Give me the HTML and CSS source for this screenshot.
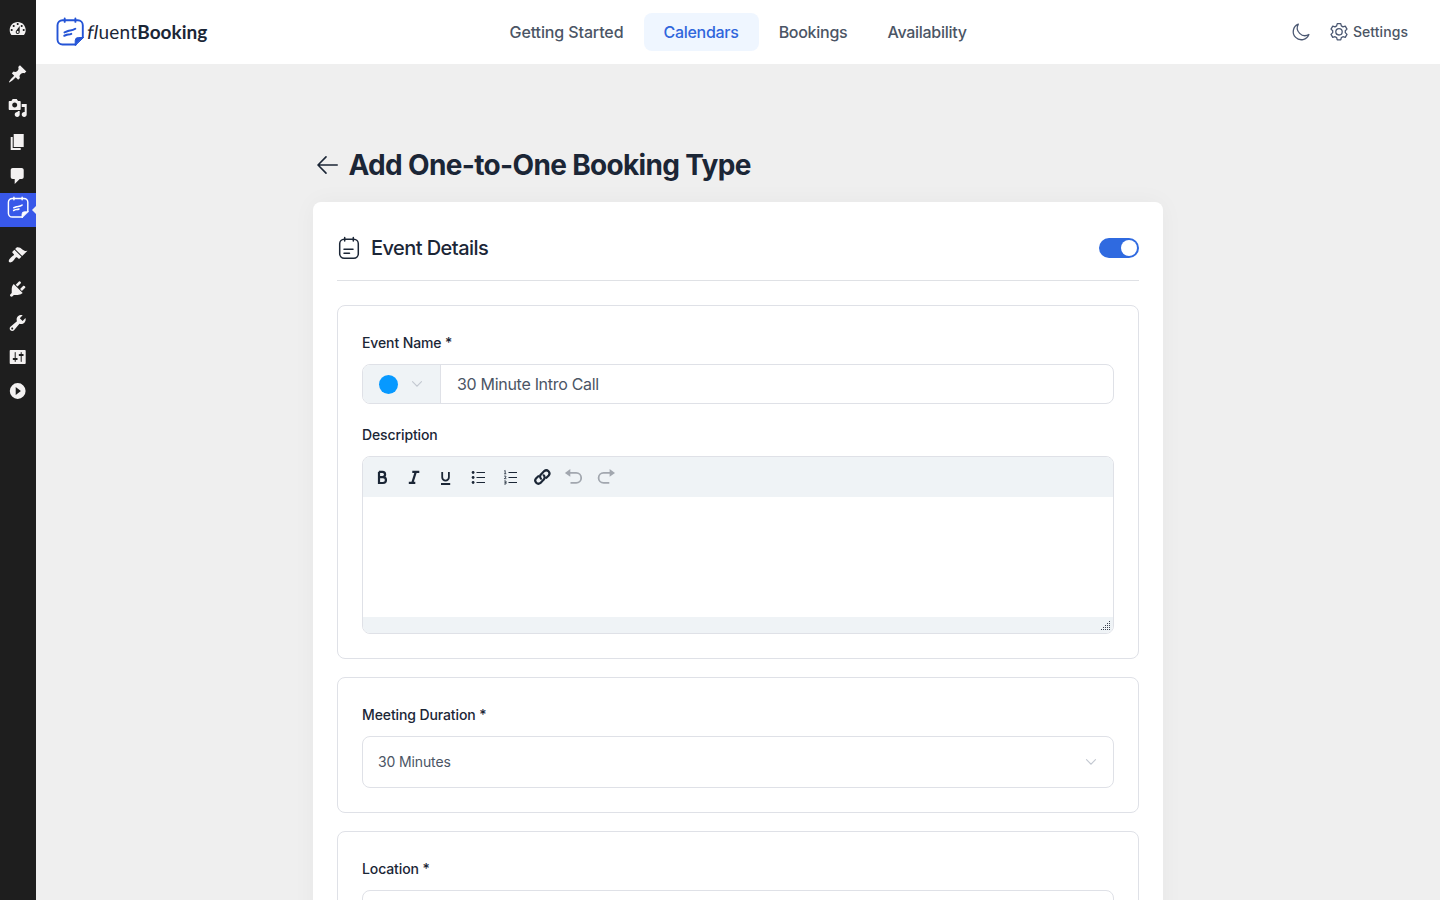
FILE: index.html
```html
<!DOCTYPE html>
<html lang="en">
<head>
<meta charset="utf-8">
<title>FluentBooking</title>
<link rel="stylesheet" href="styles.css">
</head>
<body>
<div class="app">
  <aside class="sidebar">
    <a class="side-item"><svg viewBox="0 0 20 20"><path d="M3.76 16h12.48c1.1-1.37 1.76-3.11 1.76-5 0-4.42-3.58-8-8-8s-8 3.58-8 8c0 1.89.66 3.63 1.76 5zM10 4c.55 0 1 .45 1 1s-.45 1-1 1-1-.45-1-1 .45-1 1-1zM6 6c.55 0 1 .45 1 1s-.45 1-1 1-1-.45-1-1 .45-1 1-1zm8 0c.55 0 1 .45 1 1s-.45 1-1 1-1-.45-1-1 .45-1 1-1zm-5.37 5.55L12 7v6c0 1.1-.9 2-2 2s-2-.9-2-2c0-.57.24-1.08.63-1.45zM4 10c.55 0 1 .45 1 1s-.45 1-1 1-1-.45-1-1 .45-1 1-1zm12 0c.55 0 1 .45 1 1s-.45 1-1 1-1-.45-1-1 .45-1 1-1zm-5 3c0-.55-.45-1-1-1s-1 .45-1 1 .45 1 1 1 1-.45 1-1z"/></svg></a>
    <div class="side-gap"></div>
    <a class="side-item"><svg viewBox="0 0 20 20"><path d="M10.44 3.02l1.82-1.82 6.36 6.35-1.83 1.82c-1.05-.68-2.48-.57-3.41.36l-.75.75c-.92.93-1.04 2.35-.35 3.41l-1.83 1.82-2.41-2.41-2.8 2.79c-.42.42-3.38 2.71-3.8 2.29s1.86-3.39 2.28-3.81l2.79-2.79L4.1 9.36l1.83-1.82c1.05.69 2.48.57 3.4-.36l.75-.75c.93-.92 1.05-2.35.36-3.41z"/></svg></a>
    <a class="side-item"><svg viewBox="0 0 20 20"><path d="M13 11V4c0-.55-.45-1-1-1h-1.67L9 1H5L3.67 3H2c-.55 0-1 .45-1 1v7c0 .55.45 1 1 1h10c.55 0 1-.45 1-1zM7 4.5c1.38 0 2.5 1.12 2.5 2.5S8.380 9.500 7 9.500 4.500 8.380 4.500 7 5.620 4.500 7 4.500zM14 6h5v10.500c0 1.380-1.120 2.500-2.500 2.500S14 17.880 14 16.500s1.120-2.500 2.500-2.500c.17 0 .34.02.5.05V9h-3V6zm-4 8.050V13h2v3.500c0 1.380-1.120 2.500-2.500 2.500S7 17.880 7 16.500 8.120 14 9.500 14c.17 0 .34.02.5.05z"/></svg></a>
    <a class="side-item"><svg viewBox="0 0 20 20"><path d="M6 15V2h10v13H6zm-1 1h8v2H3V5h2v11z"/></svg></a>
    <a class="side-item"><svg viewBox="0 0 20 20"><path d="M5 2h9c1.100 0 2 .9 2 2v7c0 1.100-.9 2-2 2h-2l-5 5v-5H5c-1.100 0-2-.9-2-2V4c0-1.100.9-2 2-2z"/></svg></a>
    <a class="side-item active"><svg class="brand-small" viewBox="0 0 28 30"><use href="#brand"/></svg></a>
    <div class="side-gap"></div>
    <a class="side-item"><svg viewBox="0 0 20 20"><path d="M14.480 11.060L7.410 3.990l1.500-1.500c.5-.56 2.300-.47 3.510.32 1.210.8 1.430 1.280 2.910 2.100 1.180.64 2.450 1.260 4.450.85zm-.71.71L6.700 4.700 4.930 6.470c-.39.39-.39 1.020 0 1.410l1.060 1.060c.39.39.39 1.030 0 1.420-.6.6-1.430 1.110-2.210 1.690-.35.26-.7.53-1.010.84C1.430 14.230.4 16.080 1.400 17.070c.99 1 2.840-.03 4.180-1.360.31-.31.58-.66.85-1.020.57-.78 1.080-1.610 1.690-2.210.39-.39 1.020-.39 1.410 0l1.060 1.060c.39.39 1.020.39 1.410 0z"/></svg></a>
    <a class="side-item"><svg viewBox="0 0 20 20"><path d="M13.110 4.360L9.870 7.600 8 5.730l3.240-3.240c.35-.34 1.050-.2 1.560.32.52.51.66 1.210.31 1.550zm-8 1.770l.91-1.120 9.010 9.010-1.190.84c-.71.71-2.630 1.160-3.820 1.160H6.140L4.900 17.260c-.59.59-1.540.59-2.120 0-.59-.58-.59-1.530 0-2.120l1.240-1.240v-3.880c0-1.130.4-3.190 1.090-3.890zm7.260 3.970l3.240-3.240c.34-.35 1.040-.21 1.550.31.52.51.66 1.210.31 1.550l-3.240 3.250z"/></svg></a>
    <a class="side-item"><svg viewBox="0 0 20 20"><path d="M16.680 9.770c-1.340 1.340-3.300 1.670-4.950.99l-5.410 6.520c-.99.99-2.590.99-3.580 0s-.99-2.590 0-3.570l6.520-5.420c-.68-1.650-.35-3.610.99-4.950 1.280-1.280 3.120-1.620 4.720-1.060l-2.890 2.890 2.820 2.820 2.860-2.870c.53 1.580.18 3.390-1.080 4.650zM3.810 16.210c.4.39 1.040.39 1.430 0 .4-.4.4-1.040 0-1.430-.39-.4-1.030-.4-1.430 0-.39.39-.39 1.030 0 1.430z"/></svg></a>
    <a class="side-item"><svg viewBox="0 0 20 20"><path d="M18 16V4c0-.55-.45-1-1-1H3c-.55 0-1 .45-1 1v12c0 .55.45 1 1 1h14c.55 0 1-.45 1-1zM8 11h1c.55 0 1 .45 1 1s-.45 1-1 1H8v1.500c0 .28-.22.5-.5.5s-.5-.22-.5-.5V13H6c-.55 0-1-.45-1-1s.45-1 1-1h1V5.500c0-.28.22-.5.5-.5s.5.22.5.5V11zm5-2h-1c-.55 0-1-.45-1-1s.45-1 1-1h1V5.500c0-.28.22-.5.5-.5s.5.22.5.5V7h1c.55 0 1 .45 1 1s-.45 1-1 1h-1v5.500c0 .28-.22.5-.5.5s-.5-.22-.5-.5V9z"/></svg></a>
    <a class="side-item"><svg viewBox="0 0 20 20"><path fill-rule="evenodd" d="M10 2.100a7.900 7.900 0 1 1 0 15.800a7.900 7.900 0 1 1 0-15.800zM8 6v8l5.200-4z"/></svg></a>
  </aside>

  <div class="main">
    <header class="topbar">
      <div class="logo">
        <svg class="brand" viewBox="0 0 28 30">
          <g id="brand" fill="none" stroke="currentColor" stroke-linecap="round" stroke-linejoin="round">
            <path stroke-width="1.900" d="M19.800 27.500H6.500a5 5 0 0 1-5-5V8.200a5 5 0 0 1 5-5h15.300a5 5 0 0 1 5 5v12"/>
            <path stroke-width="1.900" d="M8.700 1.500v3.400M19.400 1.500v3.400"/>
            <path stroke-width="2" d="M8.500 15.400l3.500-1.400c2-.8 4 .2 7.300-2.200M8.300 18.800l2.500-1c1.500-.5 2.500.2 4.500-.9"/>
            <path stroke-width="1" fill="currentColor" d="M27.200 20.500h-4.800a3.200 3.200 0 0 0-3.200 3.200v4.500z"/>
          </g>
        </svg>
        <span class="wordmark"><span class="slant">fl</span><span class="light">uent</span><b>Booking</b></span>
      </div>
      <nav class="nav">
        <a class="nav-item n1">Getting Started</a>
        <a class="nav-item n2 current">Calendars</a>
        <a class="nav-item n3">Bookings</a>
        <a class="nav-item n4">Availability</a>
      </nav>
      <div class="tools">
        <svg class="moon" viewBox="0 0 20 20"><path d="M7.300 2.100A8.100 8.100 0 1 0 17.900 12.500A7.700 7.700 0 0 1 7.300 2.100z"/></svg>
        <svg class="gear" viewBox="0 0 20 20"><path d="M8.250 1.600h3.500l.6 2.300 1.600.95 2.300-.7 1.750 3-1.700 1.650v1.850l1.700 1.700-1.750 3-2.300-.65-1.600.95-.6 2.250h-3.500l-.6-2.250-1.600-.95-2.300.65-1.750-3 1.700-1.700V8.800L2 7.150l1.750-3 2.300.7 1.600-.95z"/><circle cx="10" cy="9.800" r="3.200"/></svg>
        <span class="settings">Settings</span>
      </div>
    </header>

    <main class="content">
      <div class="page-head">
        <svg class="back" viewBox="0 0 22 20"><path d="M20.200 10H1.200M9 1.900L1 10l8 8.100"/></svg>
        <h1>Add One-to-One Booking Type</h1>
      </div>

      <section class="card">
        <div class="card-head">
          <svg class="event-icon" viewBox="0 0 22 24"><rect x="1.700" y="3.200" width="18.600" height="19" rx="4.500"/><path d="M6.700 1.500v3.500M15.300 1.500v3.500M6 13.200h9M6 17.200h5.500"/></svg>
          <h2>Event Details</h2>
          <span class="switch"><span class="knob"></span></span>
        </div>

        <div class="panel">
          <label class="label">Event Name *</label>
          <div class="name-field">
            <div class="color-pick"><span class="dot"></span><svg class="chev" viewBox="0 0 12 8"><path d="M1.500 1.700L6 6.200l4.500-4.500"/></svg></div>
            <div class="name-value">30 Minute Intro Call</div>
          </div>
          <label class="label">Description</label>
          <div class="editor">
            <div class="toolbar">
              <svg viewBox="0 0 20 20"><path class="s2" d="M7 4.700V16h4a2.950 2.950 0 0 0 0-5.900H7M7 4.900h3.500a2.600 2.600 0 0 1 0 5.200"/></svg>
              <svg viewBox="0 0 20 20"><path class="s2" d="M8.300 4.900h7M4.800 15.900h6.500M11.800 4.900L8.300 15.900"/></svg>
              <svg viewBox="0 0 20 20"><path class="s2 u" d="M6.200 5v5.200a3.350 3.350 0 0 0 6.700 0V5M5 17h9.200"/></svg>
              <svg viewBox="0 0 20 20"><path class="s1" d="M8.500 5.500h8.500M8.500 10.500h8.500M8.500 15.500h8.500"/><g class="fill"><circle cx="5.100" cy="5.500" r="1.400"/><circle cx="5.100" cy="10.500" r="1.400"/><circle cx="5.100" cy="15.500" r="1.400"/></g></svg>
              <svg viewBox="0 0 20 20"><path class="s1" d="M8.500 5.500h8.500M8.500 10.500h8.500M8.500 15.500h8.500"/><path class="s0" d="M4.200 4l1-.5v3.300M4.100 6.800h2.200M4.100 9.100h1.800v1L4.300 11.700h2.100M4.100 14h1.900v3H4.100M4.500 15.500h1.400"/></svg>
              <svg viewBox="0 0 20 20"><path class="s2 rnd" d="M9 11.700a3 3 0 0 1 0-4.300l3.200-3.300a3.200 3.200 0 0 1 4.500 4.500l-2.300 2.200M11.700 8.300a3 3 0 0 1 0 4.300l-3.200 3.300a3.200 3.200 0 0 1-4.500-4.500l2.300-2.200"/></svg>
              <svg class="dim" viewBox="0 0 20 20"><path class="s2 thin" d="M5 5.900H12.200a5 5 0 0 1 0 10H6.500"/><path class="fill" d="M.9 5.900L6.300 2v7.800z"/></svg>
              <svg class="dim" viewBox="0 0 20 20"><path class="s2 thin" d="M14.800 5.900H7.600a5 5 0 0 0 0 10h5.700"/><path class="fill" d="M19 5.900L13.600 2v7.800z"/></svg>
            </div>
            <div class="editor-body"></div>
            <div class="editor-foot">
              <svg viewBox="0 0 10 10" shape-rendering="crispEdges"><path d="M8 0h1v1H8zM6 2h1v1H6zM8 2h1v1H8zM4 4h1v1H4zM6 4h1v1H6zM8 4h1v1H8zM2 6h1v1H2zM4 6h1v1H4zM6 6h1v1H6zM8 6h1v1H8zM0 8h1v1H0zM2 8h1v1H2zM4 8h1v1H4zM6 8h1v1H6zM8 8h1v1H8z"/></svg>
            </div>
          </div>
        </div>

        <div class="panel">
          <label class="label">Meeting Duration *</label>
          <div class="select"><span>30 Minutes</span><svg class="chev" viewBox="0 0 12 8"><path d="M1.500 1.700L6 6.200l4.500-4.500"/></svg></div>
        </div>

        <div class="panel">
          <label class="label">Location *</label>
          <div class="select"></div>
        </div>
      </section>
    </main>
  </div>
</div>
</body>
</html>
```

FILE: styles.css
```css
* { box-sizing: border-box; }
body {
  margin: 0;
  height: 900px;
  overflow: hidden;
  background: #f0f0f1;
  font-family: Inter, "Liberation Sans", sans-serif;
  color: #1b2636;
}
svg { display: block; flex: none; }
h1, h2 { margin: 0; }
.app { display: flex; height: 900px; overflow: hidden; }

.sidebar { width: 36px; flex: none; background: #1e1e1e; padding-top: 12px; }
.side-item { display: flex; justify-content: center; align-items: center; height: 34px; position: relative; color: #f3f1f1; }
.side-item svg { width: 20px; height: 20px; fill: currentColor; }
.side-item path { transform: translateX(-0.3px); }
.side-gap { height: 11px; }
.side-item.active { background: #3858e9; color: #fff; }
.side-item .brand-small { width: 22px; height: 23px; margin-top: -5px; fill: none; }
.side-item.active::after {
  content: "";
  position: absolute;
  right: 0;
  top: 13px;
  border: 4px solid transparent;
  border-left: 0;
  border-right-color: #f0f0f1;
}

.main { flex: 1; min-width: 0; background: #efefef; }
.topbar { height: 64px; background: #fff; display: grid; grid-template-columns: 1fr auto 1fr; align-items: center; padding: 0 32px 0 20px; }
.logo { display: flex; align-items: center; gap: 3px; }
.brand { width: 28px; height: 30px; color: #2454d6; }
.wordmark { font-family: Lato, sans-serif; font-size: 19px; line-height: 24px; white-space: nowrap; color: #1b2636; }
.slant { display: inline-block; transform: skewX(-9deg); }
.slant, .light { letter-spacing: 0.2px; }
.wordmark b { font-weight: 700; letter-spacing: 0; }
.nav { display: flex; padding-left: 12px; }
.nav-item { height: 38px; line-height: 38px; font-size: 16px; font-weight: 500; color: #4b5565; border-radius: 8px; text-align: center; white-space: nowrap; letter-spacing: -0.28px; }
.n1 { width: 154px; letter-spacing: -0.12px; }
.n2 { width: 115px; }
.n3 { width: 109px; }
.n4 { width: 119px; }
.nav-item.current { background: #eff6ff; color: #2f66dc; }
.tools { display: flex; align-items: center; justify-content: flex-end; font-size: 14px; font-weight: 500; color: #4b5565; }
.tools svg { fill: none; stroke: #4b5872; stroke-width: 1.3; stroke-linejoin: round; }
.settings { line-height: 18px; margin-bottom: 1px; letter-spacing: 0.06px; }
.moon { width: 20px; height: 20px; margin-right: 18px; }
.gear { width: 20px; height: 20px; margin-right: 4px; }

.content { width: 850px; margin: 0 auto; padding-top: 80px; }
.page-head { display: flex; align-items: center; height: 42px; padding-left: 4px; gap: 10px; margin-bottom: 16px; }
.back { width: 22px; height: 20px; fill: none; stroke: #1b2636; stroke-width: 1.6; stroke-linecap: round; stroke-linejoin: round; }
h1 { font-size: 28px; font-weight: 700; line-height: 42px; letter-spacing: -0.66px; white-space: nowrap; margin-left: -0.5px; }
.card { background: #fff; border-radius: 8px; height: 760px; padding: 24px; box-shadow: 0 0 24px rgba(30, 40, 60, 0.04); }
.card-head { display: flex; align-items: center; height: 55px; padding-bottom: 10px; border-bottom: 1px solid #dfe1e5; margin-bottom: 24px; }
.event-icon { width: 22px; height: 24px; margin: 0 11px 0 1px; fill: none; stroke: #1b2636; stroke-width: 1.5; stroke-linecap: round; }
h2 { font-size: 20px; font-weight: 500; letter-spacing: -0.56px; flex: 1; }
.switch { width: 40px; height: 20px; border-radius: 10px; background: #2f6ae0; display: flex; justify-content: flex-end; padding: 2px; }
.knob { width: 16px; height: 16px; border-radius: 50%; background: #fff; }

.panel { border: 1px solid #dfe1e7; border-radius: 8px; padding: 24px; margin-bottom: 18px; }
.label { display: block; font-size: 14px; font-weight: 500; line-height: 26px; height: 34px; letter-spacing: -0.11px; }
.name-field { display: flex; height: 40px; border: 1px solid #dfe1e7; border-radius: 8px; overflow: hidden; margin-bottom: 18px; }
.color-pick { width: 78px; background: #eff3f6; border-right: 1px solid #dfe1e7; display: flex; align-items: center; padding-left: 16px; }
.dot { width: 19px; height: 19px; border-radius: 50%; background: #0799ff; margin-right: 13px; }
.chev { width: 12px; height: 8px; fill: none; stroke: #c3c8d1; stroke-width: 1.1; stroke-linecap: round; }
.name-value { padding-left: 16px; line-height: 38px; font-size: 16px; color: #4b5565; letter-spacing: -0.3px; }
.editor { border: 1px solid #dfe1e7; border-radius: 8px; overflow: hidden; }
.toolbar { display: flex; align-items: center; gap: 12px; height: 40px; padding-left: 9px; background: #eff3f6; color: #1b2636; }
.toolbar svg { width: 20px; height: 20px; }
.s0, .s1, .s2 { fill: none; stroke: currentColor; }
.s0 { stroke-width: 0.8; }
.s1 { stroke-width: 1.2; }
.s2 { stroke-width: 2.2; }
.u { stroke-width: 1.8; }
.rnd { stroke-linecap: round; }
.thin { stroke-width: 1.8; }
.fill { fill: currentColor; }
.dim { color: #a2a7af; }
.editor-body { height: 120px; background: #fff; }
.editor-foot { height: 16px; background: #eff3f6; display: flex; justify-content: flex-end; align-items: flex-end; padding: 0 2px 2px 0; }
.editor-foot svg { width: 10px; height: 10px; fill: #3c4350; }
.select { height: 52px; border: 1px solid #dfe1e7; border-radius: 8px; display: flex; align-items: center; justify-content: space-between; padding: 0 16px 0 15px; font-size: 14px; line-height: 18px; letter-spacing: -0.13px; color: #4b5565; }
.select span { margin-bottom: 1px; }
```
